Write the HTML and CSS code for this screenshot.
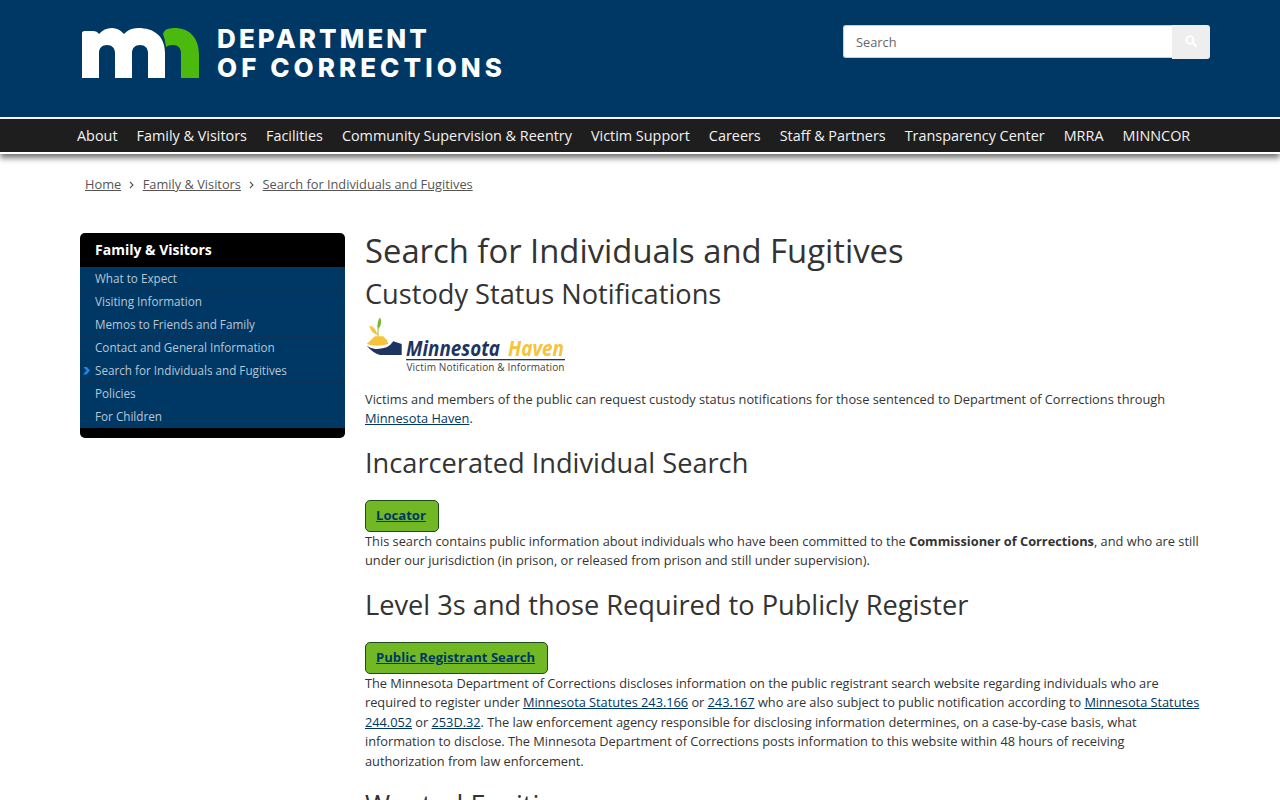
FILE: index.html

```html
<!DOCTYPE html>
<html lang="en">
<head>
  <meta charset="UTF-8" />
  <meta name="viewport" content="width=device-width, initial-scale=1.0" />
  <title>Search for Individuals and Fugitives</title>
  <link rel="stylesheet" href="styles.css">
</head>
<body>

  <header class="site-header">
    <a class="logo" href="#">
      <svg class="logo-mark" viewBox="0 0 117 50" width="117" height="50" aria-hidden="true">
        <path fill="#fff" d="M0 50V5Q0 3 3 3H11Q15 3 17 6Q22 0 30 0Q37 0 42 6Q47 0 56 0C72 0 83 8 83 25V50H66V25C66 20 63 17 58 17C53 17 50 20 50 25V50H33V25C33 20 30 17 25 17C20 17 17 20 17 25V50Z"/>
        <path fill="#4cb90f" d="M81 6Q82 0 92 0C108 0 117 10 117 27V50H99V25C99 20 96 17 91 17Q86 17 84 19Q83 11 81 6Z"/>
      </svg>
      <span class="logo-text">
        <span class="logo-line-1">DEPARTMENT</span>
        <span class="logo-line-2">OF CORRECTIONS</span>
      </span>
    </a>
    <form class="search">
      <input class="search-input" type="text" placeholder="Search">
      <button class="search-btn" type="button" aria-label="Search">
        <svg viewBox="0 0 14 14" width="12" height="12" aria-hidden="true">
          <circle cx="5.8" cy="5.8" r="4.2" fill="none" stroke="#fff" stroke-width="2.2"/>
          <path d="M9 9l4 4" stroke="#fff" stroke-width="2.6" stroke-linecap="round"/>
        </svg>
      </button>
    </form>
  </header>

  <nav class="main-nav">
    <a href="#">About</a>
    <a href="#">Family &amp; Visitors</a>
    <a href="#">Facilities</a>
    <a href="#">Community Supervision &amp; Reentry</a>
    <a href="#">Victim Support</a>
    <a href="#">Careers</a>
    <a href="#">Staff &amp; Partners</a>
    <a href="#">Transparency Center</a>
    <a href="#">MRRA</a>
    <a href="#">MINNCOR</a>
  </nav>

  <div class="breadcrumb">
    <a href="#">Home</a>
    <svg class="crumb-sep" viewBox="0 0 6 8" width="6" height="8" aria-hidden="true"><path d="M1 1l3 3-3 3" fill="none" stroke="#555" stroke-width="1.1"/></svg>
    <a href="#">Family &amp; Visitors</a>
    <svg class="crumb-sep" viewBox="0 0 6 8" width="6" height="8" aria-hidden="true"><path d="M1 1l3 3-3 3" fill="none" stroke="#555" stroke-width="1.1"/></svg>
    <a href="#">Search for Individuals and Fugitives</a>
  </div>

  <div class="page">
    <aside class="side-nav">
      <h2 class="side-title">Family &amp; Visitors</h2>
      <ul class="side-list">
        <li><a href="#">What to Expect</a></li>
        <li><a href="#">Visiting Information</a></li>
        <li><a href="#">Memos to Friends and Family</a></li>
        <li><a href="#">Contact and General Information</a></li>
        <li class="current"><a href="#">Search for Individuals and Fugitives</a></li>
        <li><a href="#">Policies</a></li>
        <li><a href="#">For Children</a></li>
      </ul>
    </aside>

    <main class="content">
      <h1>Search for Individuals and Fugitives</h1>
      <h2 class="first-sub">Custody Status Notifications</h2>

      <svg class="haven-logo" viewBox="0 0 204 60" width="204" height="60" role="img" aria-label="Minnesota Haven">
        <path d="M4.3 10.7Q11 12 12.5 20Q6 18 4.3 10.7Z" fill="#f6c33b"/>
        <path d="M15 2.3Q18 8 13.5 14Q11 8 15 2.3Z" fill="#7ab82e"/>
        <path d="M13 10V22" stroke="#7ab82e" stroke-width="0.9"/>
        <path d="M1.7 29Q6 25 10 21.3H18.3Q22 24 23.3 29Q16 31 11.7 30.7Q6 30.5 1.7 29Z" fill="#f6c33b"/>
        <path d="M1.7 30.7Q8 38 15 40H36.7V29L28.3 26.3Q25 31 21.7 32.3Q15 34.5 10 34Q5 33 1.7 30.7Z" fill="#1d3461"/>
        <text class="haven-name" x="41" y="40.5" textLength="94" lengthAdjust="spacingAndGlyphs">Minnesota</text>
        <text class="haven-name haven-gold" x="143" y="40.5" textLength="56" lengthAdjust="spacingAndGlyphs">Haven</text>
        <rect x="41" y="44" width="159" height="1.3" fill="#1d3461"/>
        <text class="haven-sub" x="41.5" y="55.5" textLength="158" lengthAdjust="spacing">Victim Notification &amp; Information</text>
      </svg>

      <p>Victims and members of the public can request custody status notifications for those sentenced to Department of Corrections through <a href="#">Minnesota Haven</a>.</p>

      <h2>Incarcerated Individual Search</h2>
      <a class="green-btn" href="#">Locator</a>
      <p>This search contains public information about individuals who have been committed to the <strong>Commissioner of Corrections</strong>, and who are still under our jurisdiction (in prison, or released from prison and still under supervision).</p>

      <h2>Level 3s and those Required to Publicly Register</h2>
      <a class="green-btn" href="#">Public Registrant Search</a>
      <p class="tight">The Minnesota Department of Corrections discloses information on the public registrant search website regarding individuals who are required to register under <a href="#">Minnesota Statutes 243.166</a> or <a href="#">243.167</a> who are also subject to public notification according to <a href="#">Minnesota Statutes 244.052</a> or <a href="#">253D.32</a>. The law enforcement agency responsible for disclosing information determines, on a case-by-case basis, what information&nbsp;to disclose. The Minnesota Department of Corrections posts information to this website within 48 hours of receiving authorization from law enforcement.</p>

      <h2>Wanted Fugitives</h2>
    </main>
  </div>

</body>
</html>
```

FILE: styles.css

```css
html, body {
  height: 800px;
  overflow: hidden;
}
body {
  margin: 0;
  font-family: "Open Sans", sans-serif;
  font-size: 12.8px;
  line-height: 19.5px;
  color: #333;
  background-color: #fff;
}
a {
  color: #003865;
}

/* header */
.site-header {
  height: 117px;
  background-color: #003865;
  display: flex;
  justify-content: space-between;
  align-items: flex-start;
  padding: 0 70px 0 82px;
}
.logo {
  display: flex;
  gap: 18px;
  margin-top: 28px;
  text-decoration: none;
}
.logo-mark {
  display: block;
}
.logo-text {
  display: flex;
  flex-direction: column;
  font-family: Inter, sans-serif;
  font-weight: 800;
  font-size: 26px;
  line-height: 29px;
  color: #fff;
  margin-top: -4px;
}
.logo-line-1 {
  letter-spacing: 3.1px;
}
.logo-line-2 {
  letter-spacing: 4.05px;
}
.search {
  display: flex;
  align-items: flex-start;
  margin-top: 25px;
}
.search-input {
  width: 329px;
  height: 33px;
  box-sizing: border-box;
  border: 1px solid #ccc;
  border-right: 0;
  border-radius: 3px 0 0 3px;
  padding: 0 12px;
  font-family: "Open Sans", sans-serif;
  font-size: 12.8px;
  color: #555;
}
.search-input::placeholder {
  color: #666;
  opacity: 1;
}
.search-btn {
  width: 38px;
  height: 34px;
  border: 0;
  border-radius: 0 3px 3px 0;
  background-color: #eee;
  padding: 0;
}

/* main nav */
.main-nav {
  height: 33px;
  margin-top: 2px;
  box-sizing: content-box;
  background-color: #1e1e1e;
  border-bottom: 2px solid #fff;
  box-shadow: 0 4px 6px rgba(0, 0, 0, 0.55);
  display: flex;
  align-items: center;
  gap: 19px;
  padding-left: 77px;
  position: relative;
}
.main-nav a {
  color: #f2f2f2;
  font-size: 14.4px;
  text-decoration: none;
}

/* breadcrumb */
.breadcrumb {
  display: flex;
  align-items: center;
  gap: 7.8px;
  padding: 21px 0 0 85px;
  color: #555;
}
.breadcrumb a {
  color: #555;
}

/* two columns */
.page {
  display: flex;
  gap: 20px;
  padding: 38px 80px 0;
}
.side-nav {
  flex: 0 0 265px;
  align-self: flex-start;
  background-color: #000;
  border-radius: 5px;
  padding-bottom: 10px;
  overflow: hidden;
}
.side-title {
  margin: 0;
  padding: 7px 15px;
  height: 20px;
  font-size: 14px;
  line-height: 20px;
  font-weight: 700;
  color: #fff;
}
.side-list {
  list-style: none;
  margin: 0;
  padding: 0;
  background-color: #003865;
}
.side-list li {
  height: 22px;
  border-top: 1px solid #0c3358;
  position: relative;
}
.side-list a {
  display: block;
  padding-left: 15px;
  font-size: 11.7px;
  line-height: 21px;
  color: #b9c7d4;
  text-decoration: none;
}
.side-list .current::before {
  content: "";
  position: absolute;
  left: 3px;
  top: 7px;
  width: 7px;
  height: 8px;
  background-color: #1b87e6;
  clip-path: polygon(0 0, 50% 0, 100% 50%, 50% 100%, 0 100%, 50% 50%);
}

/* content */
.content {
  flex: 1;
  min-width: 0;
}
.content h1 {
  margin: 0;
  font-size: 32.8px;
  line-height: 36px;
  font-weight: 400;
}
.content h2 {
  margin: 17px 0 20px;
  font-size: 27.2px;
  line-height: 34px;
  font-weight: 400;
}
.content .first-sub {
  margin: 8px 0 0;
}
.content p {
  margin: 0;
}
.content .tight {
  letter-spacing: -0.03px;
}
.haven-logo {
  display: block;
  margin: 4px 0 15px;
}
.haven-name {
  font-family: "Open Sans", sans-serif;
  font-size: 21px;
  font-weight: 700;
  font-style: italic;
  fill: #1d3461;
}
.haven-gold {
  fill: #f6c33b;
}
.haven-sub {
  font-family: "Open Sans", sans-serif;
  font-size: 10px;
  fill: #444;
}
.green-btn {
  display: inline-block;
  padding: 4px 12px 6px 10px;
  border: 1px solid #1b4b1a;
  border-radius: 5px;
  background-color: #72b824;
  font-size: 13.12px;
  font-weight: 700;
  color: #003865;
  line-height: 20px;
}
```
